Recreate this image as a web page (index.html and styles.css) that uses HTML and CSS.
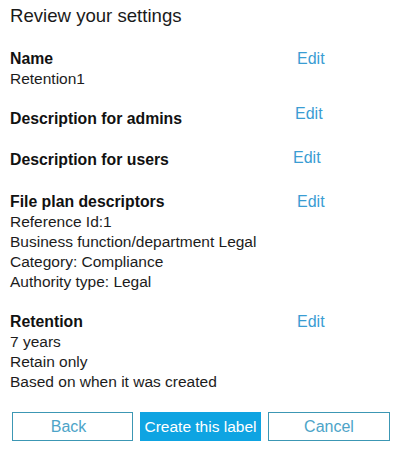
FILE: index.html
```html
<!DOCTYPE html>
<html lang="en">
<head>
    <meta charset="UTF-8">
    <meta name="viewport" content="width=device-width, initial-scale=1.0">
    <title>Review your settings</title>
    <link rel="stylesheet" href="styles.css">
</head>
<body>
    <div class="review">
        <h1>Review your settings</h1>

        <div class="setting">
            <div class="info">
                <div class="label">Name</div>
                <div>Retention1</div>
            </div>
            <a href="#" class="edit">Edit</a>
        </div>

        <div class="setting gap-21">
            <div class="info">
                <div class="label">Description for admins</div>
            </div>
            <a href="#" class="edit edit-admins">Edit</a>
        </div>

        <div class="setting gap-22">
            <div class="info">
                <div class="label">Description for users</div>
            </div>
            <a href="#" class="edit edit-users">Edit</a>
        </div>

        <div class="setting">
            <div class="info">
                <div class="label">File plan descriptors</div>
                <div>Reference Id:1</div>
                <div>Business function/department Legal</div>
                <div>Category: Compliance</div>
                <div>Authority type: Legal</div>
            </div>
            <a href="#" class="edit">Edit</a>
        </div>

        <div class="setting">
            <div class="info">
                <div class="label">Retention</div>
                <div>7 years</div>
                <div>Retain only</div>
                <div>Based on when it was created</div>
            </div>
            <a href="#" class="edit">Edit</a>
        </div>

        <div class="buttons">
            <button type="button" class="btn back">Back</button>
            <button type="button" class="btn primary">Create this label</button>
            <button type="button" class="btn cancel">Cancel</button>
        </div>
    </div>
</body>
</html>
```

FILE: styles.css
```css
body {
    margin: 0;
    padding: 0;
    background-color: #fff;
    font-family: "Liberation Sans", Arial, sans-serif;
    color: #1c1c1c;
}
.review {
    padding: 5px 0 0 10px;
}
h1 {
    margin: 0 0 22px 0;
    font-size: 18.6px;
    line-height: 22px;
    font-weight: normal;
    color: #1a1a1a;
}
.setting {
    display: grid;
    grid-template-columns: 287px auto;
    align-items: start;
    margin-bottom: 20px;
    font-size: 15.5px;
    line-height: 20px;
}
.setting.gap-21 {
    margin-bottom: 21px;
}
.setting.gap-22 {
    margin-bottom: 22px;
}
.label {
    font-weight: bold;
    font-size: 15.8px;
    color: #111;
}
.edit {
    justify-self: start;
    font-size: 16px;
    line-height: 20px;
    color: #3a9dd3;
    text-decoration: none;
}
.edit-admins {
    margin: -5px 0 0 -2px;
}
.edit-users {
    margin: -2px 0 0 -4px;
}
.buttons {
    display: flex;
    gap: 7px;
    padding-left: 2px;
}
.btn {
    width: 121px;
    height: 29px;
    padding: 0;
    background-color: #fff;
    border: 1px solid #3c97b4;
    font-family: "Liberation Sans", Arial, sans-serif;
    font-size: 16px;
    line-height: 27px;
    color: #4da4c8;
}
.btn.back {
    padding-right: 8px;
}
.btn.primary {
    background-color: #0ea4e2;
    border-color: #0ea4e2;
    color: #fff;
    font-size: 15.5px;
    line-height: 25px;
}
.btn.cancel {
    width: 122px;
    line-height: 28px;
}
```
